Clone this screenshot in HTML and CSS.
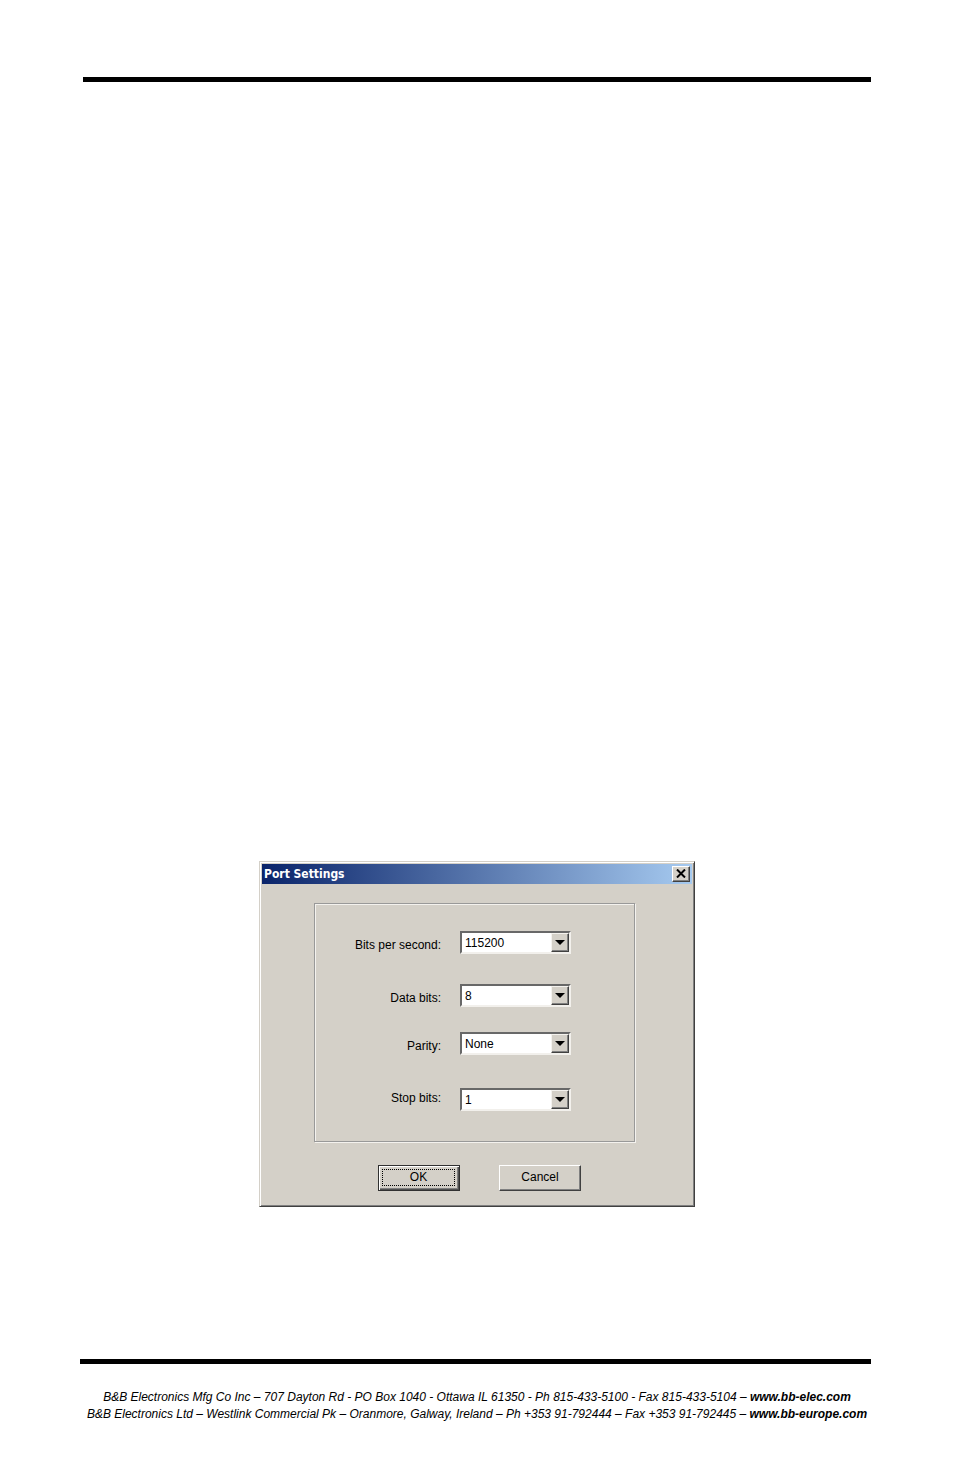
FILE: index.html
```html
<!DOCTYPE html>
<html lang="en">
<head>
<meta charset="utf-8">
<title>Port Settings</title>
<link rel="stylesheet" href="styles.css">
</head>
<body>
<div class="page">
  <header class="page-header"></header>
  <main class="content">
    <form class="dialog" role="dialog" aria-labelledby="dialog-title">
      <div class="titlebar">
        <h1 class="title" id="dialog-title">Port Settings</h1>
        <button class="close" type="button" aria-label="Close">
          <svg class="close-icon" viewBox="0 0 10 9"><path d="M1 .5 9 8.500M9 .5 1 8.500"/></svg>
        </button>
      </div>
      <div class="body">
        <div class="group">
          <div class="row">
            <label class="label" for="bps">Bits per second:</label>
            <span class="combo"><select class="select" id="bps"><option>115200</option></select><span class="drop"><svg class="arrow" viewBox="0 0 10 5"><path d="M0 0h10L5 5z"/></svg></span></span>
          </div>
          <div class="row row-data">
            <label class="label" for="data">Data bits:</label>
            <span class="combo"><select class="select" id="data"><option>8</option></select><span class="drop"><svg class="arrow" viewBox="0 0 10 5"><path d="M0 0h10L5 5z"/></svg></span></span>
          </div>
          <div class="row row-parity">
            <label class="label" for="parity">Parity:</label>
            <span class="combo"><select class="select" id="parity"><option>None</option></select><span class="drop"><svg class="arrow" viewBox="0 0 10 5"><path d="M0 0h10L5 5z"/></svg></span></span>
          </div>
          <div class="row row-stop">
            <label class="label" for="stop">Stop bits:</label>
            <span class="combo"><select class="select" id="stop"><option>1</option></select><span class="drop"><svg class="arrow" viewBox="0 0 10 5"><path d="M0 0h10L5 5z"/></svg></span></span>
          </div>
        </div>
        <div class="actions">
          <button class="button button-default" type="submit"><span class="focus">OK</span></button>
          <button class="button" type="button">Cancel</button>
        </div>
      </div>
    </form>
  </main>
  <footer class="page-footer">
    <p class="address">B&amp;B Electronics Mfg Co Inc – 707 Dayton Rd - PO Box 1040 - Ottawa IL 61350 - Ph 815-433-5100 - Fax 815-433-5104 – <a class="site" href="#">www.bb-elec.com</a></p>
    <p class="address">B&amp;B Electronics Ltd – Westlink Commercial Pk – Oranmore, Galway, Ireland – Ph +353 91-792444 – Fax +353 91-792445 – <a class="site" href="#">www.bb-europe.com</a></p>
  </footer>
</div>
</body>
</html>
```
FILE: styles.css
```css
* { box-sizing: border-box; }

body {
  margin: 0;
  background: #fff;
  color: #000;
  font-family: "Liberation Sans", Arial, sans-serif;
}

.page {
  display: flex;
  flex-direction: column;
  min-height: 100vh;
  padding: 77px 83px 52px 80px;
}

.page-header {
  margin-left: 3px;
  border-top: 5px solid #000;
}

.content {
  flex: 1;
  display: flex;
  justify-content: center;
  align-items: flex-end;
  padding: 24px 0 152px 3px;
}

.dialog {
  width: 100%;
  max-width: 436px;
  padding: 1px;
  border: 1px solid;
  border-color: #d4d0c8 #404040 #404040 #d4d0c8;
  background: #d4d0c8;
  box-shadow: inset 1px 1px #fff, inset -1px -1px #808080;
}

.titlebar {
  display: flex;
  align-items: center;
  justify-content: space-between;
  height: 20px;
  margin: 1px;
  padding: 0 2px;
  background: linear-gradient(to right, #0a246a, #a6caf0);
}

.title {
  margin: 0;
  color: #fff;
  font: bold 12px/20px "DejaVu Sans Condensed", "DejaVu Sans", sans-serif;
}

.close {
  display: flex;
  align-items: center;
  justify-content: center;
  width: 18px;
  height: 16px;
  padding: 0 1px 1px 0;
  border: 1px solid;
  border-color: #fff #404040 #404040 #fff;
  background: #d4d0c8;
  box-shadow: inset -1px -1px #808080;
}

.close-icon {
  width: 10px;
  height: 9px;
  fill: none;
  stroke: #000;
  stroke-width: 2;
}

.body {
  padding: 18px 58px 14px 53px;
}

.group {
  padding: 27px 63px 30px 24px;
  border: 1px solid #999;
  box-shadow: inset 1px 1px #f4f2ee, 1px 1px #f4f2ee;
}

.row {
  display: flex;
  align-items: flex-start;
  justify-content: flex-end;
  gap: 19px;
}

.row-data { margin-top: 30px; }
.row-parity { margin-top: 25px; }
.row-stop { margin-top: 33px; }

.label {
  padding-top: 6px;
  font-size: 12px;
  line-height: 16px;
}

.row-stop .label { padding-top: 2px; }

.combo {
  position: relative;
  width: 111px;
  height: 23px;
}

.select {
  appearance: none;
  display: block;
  width: 100%;
  height: 100%;
  margin: 0;
  padding: 0 20px 0 3px;
  border: 2px solid;
  border-color: #686868 #f2f0ec #f2f0ec #686868;
  border-radius: 0;
  outline: 0;
  background: #fff;
  color: #000;
  font: 12px/18px "Liberation Sans", Arial, sans-serif;
}

.drop {
  position: absolute;
  top: 2px;
  right: 2px;
  bottom: 2px;
  display: flex;
  align-items: center;
  justify-content: center;
  width: 18px;
  border: 1px solid;
  border-color: #f4f2ee #404040 #404040 #f4f2ee;
  background: #d4d0c8;
  box-shadow: inset -1px -1px #808080;
  pointer-events: none;
}

.arrow {
  width: 10px;
  height: 5px;
}

.actions {
  display: flex;
  justify-content: center;
  gap: 39px;
  padding: 23px 0 0 10px;
}

.button {
  width: 82px;
  height: 26px;
  padding: 0 0 2px;
  border: 1px solid;
  border-color: #fff #404040 #404040 #fff;
  border-radius: 0;
  background: #d4d0c8;
  color: #000;
  box-shadow: inset -1px -1px #808080;
  font: 12px/16px "Liberation Sans", Arial, sans-serif;
}

.button-default {
  padding: 3px 4px 4px 3px;
  border-color: #303030;
  box-shadow: inset 1px 1px #fff, inset -1px -1px #505050, inset -2px -2px #808080;
}

.focus {
  display: block;
  border: 1px dotted #000;
  line-height: 15px;
}

.page-footer {
  border-top: 5px solid #000;
  padding: 25px 0 0 3px;
  text-align: center;
}

.address {
  margin: 0;
  font: italic 12px/17px "Liberation Sans", Arial, sans-serif;
}

.site {
  color: inherit;
  font-weight: bold;
  text-decoration: none;
}
```
